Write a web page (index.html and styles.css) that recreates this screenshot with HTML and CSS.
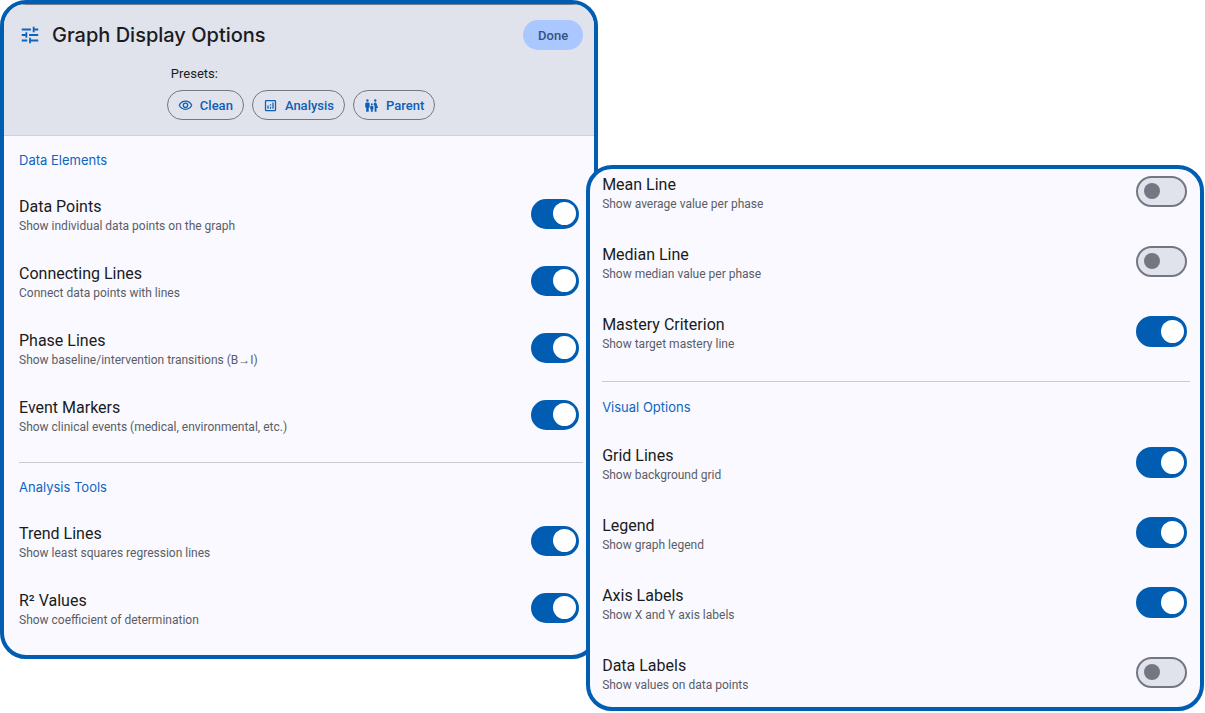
FILE: index.html
```html
<!DOCTYPE html>
<html lang="en">
<head>
  <meta charset="UTF-8" />
  <title>Graph Display Options</title>
  <link rel="stylesheet" href="styles.css">
</head>
<body>
  <main class="screens">
    <section class="panel panel-main">
      <header class="header">
        <div class="title-bar">
          <svg class="title-icon" viewBox="0 0 24 24" aria-hidden="true"><path d="M3 17v2h6v-2H3zM3 5v2h10V5H3zm10 16v-2h8v-2h-8v-2h-2v6h2zM7 9v2H3v2h4v2h2V9H7zm14 4v-2H11v2h10zm-6-4h2V7h4V5h-4V3h-2v6z"/></svg>
          <h1>Graph Display Options</h1>
          <button type="button" class="done">Done</button>
        </div>
        <div class="presets">
          <p>Presets:</p>
          <div class="preset-buttons">
            <button type="button" class="preset">
              <svg viewBox="0 0 24 24" aria-hidden="true"><path d="M12 6c3.79 0 7.17 2.13 8.82 5.5C19.17 14.87 15.79 17 12 17s-7.17-2.13-8.82-5.5C4.83 8.13 8.21 6 12 6m0-2C7 4 2.73 7.11 1 11.5 2.73 15.89 7 19 12 19s9.27-3.11 11-7.5C21.27 7.11 17 4 12 4zm0 5a2.5 2.5 0 1 1 0 5 2.5 2.5 0 0 1 0-5m0-2a4.5 4.5 0 1 0 0 9 4.5 4.5 0 0 0 0-9z"/></svg>
              Clean
            </button>
            <button type="button" class="preset">
              <svg viewBox="0 0 24 24" aria-hidden="true"><path d="M19 3H5a2 2 0 0 0-2 2v14a2 2 0 0 0 2 2h14a2 2 0 0 0 2-2V5a2 2 0 0 0-2-2zm0 16H5V5h14v14zM7 12h2v5H7zm8-5h2v10h-2zm-4 7h2v3h-2zm0-4h2v2h-2z"/></svg>
              Analysis
            </button>
            <button type="button" class="preset">
              <svg viewBox="0 0 24 24" aria-hidden="true"><path d="M16 4a2 2 0 1 1 4 0 2 2 0 0 1-4 0zm4 18v-6h2.500L19.960 8.370A2 2 0 0 0 18.060 7h-.120a2 2 0 0 0-1.900 1.370l-.860 2.580c1.080.600 1.820 1.730 1.820 3.050v8h3zm-7.500-10.500a1.500 1.500 0 1 0 0-3 1.500 1.500 0 0 0 0 3zM5.500 6a2 2 0 1 0 0-4 2 2 0 0 0 0 4zm2 16v-7H9V9a2 2 0 0 0-2-2H4a2 2 0 0 0-2 2v6h1.500v7h4zm6.500 0v-4h1v-4a1.500 1.500 0 0 0-1.500-1.500h-2A1.500 1.500 0 0 0 10 14v4h1v4h3z"/></svg>
              Parent
            </button>
          </div>
        </div>
      </header>

      <div class="group">
        <h2>Data Elements</h2>
        <label class="option">
          <span class="text"><span class="name">Data Points</span><span class="hint">Show individual data points on the graph</span></span>
          <input type="checkbox" class="switch" checked />
        </label>
        <label class="option">
          <span class="text"><span class="name">Connecting Lines</span><span class="hint">Connect data points with lines</span></span>
          <input type="checkbox" class="switch" checked />
        </label>
        <label class="option">
          <span class="text"><span class="name">Phase Lines</span><span class="hint">Show baseline/intervention transitions (B→I)</span></span>
          <input type="checkbox" class="switch" checked />
        </label>
        <label class="option">
          <span class="text"><span class="name">Event Markers</span><span class="hint">Show clinical events (medical, environmental, etc.)</span></span>
          <input type="checkbox" class="switch" checked />
        </label>
      </div>

      <div class="group">
        <h2>Analysis Tools</h2>
        <label class="option">
          <span class="text"><span class="name">Trend Lines</span><span class="hint">Show least squares regression lines</span></span>
          <input type="checkbox" class="switch" checked />
        </label>
        <label class="option">
          <span class="text"><span class="name">R² Values</span><span class="hint">Show coefficient of determination</span></span>
          <input type="checkbox" class="switch" checked />
        </label>
      </div>
    </section>

    <section class="panel panel-scrolled">
      <div class="group">
        <label class="option">
          <span class="text"><span class="name">Mean Line</span><span class="hint">Show average value per phase</span></span>
          <input type="checkbox" class="switch" />
        </label>
        <label class="option">
          <span class="text"><span class="name">Median Line</span><span class="hint">Show median value per phase</span></span>
          <input type="checkbox" class="switch" />
        </label>
        <label class="option">
          <span class="text"><span class="name">Mastery Criterion</span><span class="hint">Show target mastery line</span></span>
          <input type="checkbox" class="switch" checked />
        </label>
      </div>

      <div class="group">
        <h2>Visual Options</h2>
        <label class="option">
          <span class="text"><span class="name">Grid Lines</span><span class="hint">Show background grid</span></span>
          <input type="checkbox" class="switch" checked />
        </label>
        <label class="option">
          <span class="text"><span class="name">Legend</span><span class="hint">Show graph legend</span></span>
          <input type="checkbox" class="switch" checked />
        </label>
        <label class="option">
          <span class="text"><span class="name">Axis Labels</span><span class="hint">Show X and Y axis labels</span></span>
          <input type="checkbox" class="switch" checked />
        </label>
        <label class="option">
          <span class="text"><span class="name">Data Labels</span><span class="hint">Show values on data points</span></span>
          <input type="checkbox" class="switch" />
        </label>
      </div>
    </section>
  </main>
</body>
</html>
```
FILE: styles.css
```css
* {
  box-sizing: border-box;
}
body {
  margin: 0;
  background: #fff;
  color: #1a1b21;
  font-family: Roboto, "Liberation Sans", sans-serif;
}
h1, h2, p {
  margin: 0;
}
.screens {
  display: flex;
  align-items: flex-start;
  padding-right: 1px;
}
.panel {
  min-width: 0;
  overflow: hidden;
  border: 4px solid #005db2;
  border-radius: 26px;
  background: #f9f9ff;
}
.panel-main {
  flex: 598 1 0;
}
/* second screen lies over the edge of the first */
.panel-scrolled {
  z-index: 1;
  flex: 618 1 0;
  margin: 165px 0 0 -12px;
}

.header {
  padding: 15px 11px 15px 15px;
  border-top: 1px solid #747f94;
  border-bottom: 1px solid #cfd1da;
  background: #e0e2ec;
}
.title-bar {
  display: flex;
  align-items: center;
}
.title-icon {
  width: 22px;
  height: 22px;
  margin-right: 11px;
  fill: #0f65bd;
}
h1 {
  flex: 1;
  font: 500 20px/30px Inter, sans-serif;
}
.done {
  height: 30px;
  padding: 0 15px;
  border: 0;
  border-radius: 15px;
  background: #abc7ff;
  color: #36527f;
  font: 500 13px Roboto, sans-serif;
}
.presets {
  width: fit-content;
  margin: 14px auto 0;
}
.presets p {
  padding-left: 4px;
  font-size: 13px;
  line-height: 20px;
}
.preset-buttons {
  display: flex;
  gap: 8px;
  margin-top: 6px;
}
.preset {
  display: flex;
  align-items: center;
  gap: 7px;
  height: 30px;
  padding: 0 10px;
  border: 1px solid #747782;
  border-radius: 15px;
  background: none;
  color: #0f5fb4;
  font: 500 13px Roboto, sans-serif;
}
.preset svg {
  width: 15px;
  height: 15px;
  fill: currentColor;
}

.group {
  padding: 14px 11px 14px 15px;
}
.group + .group {
  padding-top: 0;
}
.group + .group::before {
  content: "";
  display: block;
  height: 1px;
  margin-bottom: 14px;
  background: #c9cbd5;
}
h2 {
  padding-bottom: 10px;
  color: #0f65bd;
  font: 400 13px/20px Inter, sans-serif;
}
.option {
  display: flex;
  align-items: center;
  justify-content: space-between;
  height: 67px;
  padding-right: 4px;
}
.text {
  padding-top: 5px;
}
.name, .hint {
  display: block;
}
.name {
  font-size: 16px;
  line-height: 20px;
}
.hint {
  color: #5a5d66;
  font-size: 12px;
  line-height: 18px;
}

.switch {
  display: flex;
  align-items: center;
  flex: none;
  appearance: none;
  width: 48px;
  height: 30px;
  margin: 0;
  padding: 0 6px;
  border: 2px solid #747782;
  border-radius: 16px;
  background: #e0e2ec;
}
.switch::before {
  content: "";
  width: 16px;
  height: 16px;
  border-radius: 50%;
  background: #747782;
}
.switch:checked {
  justify-content: flex-end;
  padding: 0 1px;
  border-color: #005db2;
  background: #005db2;
}
.switch:checked::before {
  width: 23px;
  height: 23px;
  background: #fff;
}

/* scrolled down, so the first row is cut by the top edge */
.panel-scrolled .group {
  padding: 0 10px 14px 12px;
}
.panel-scrolled .group:first-child {
  margin-top: -13px;
  padding-bottom: 15px;
}
.panel-scrolled .group:last-child {
  padding-bottom: 0;
}
.panel-scrolled .group::before {
  margin-bottom: 15px;
}
.panel-scrolled .option {
  height: 70px;
  padding-right: 3px;
}
.panel-scrolled .switch {
  width: 51px;
  height: 31px;
}
```
